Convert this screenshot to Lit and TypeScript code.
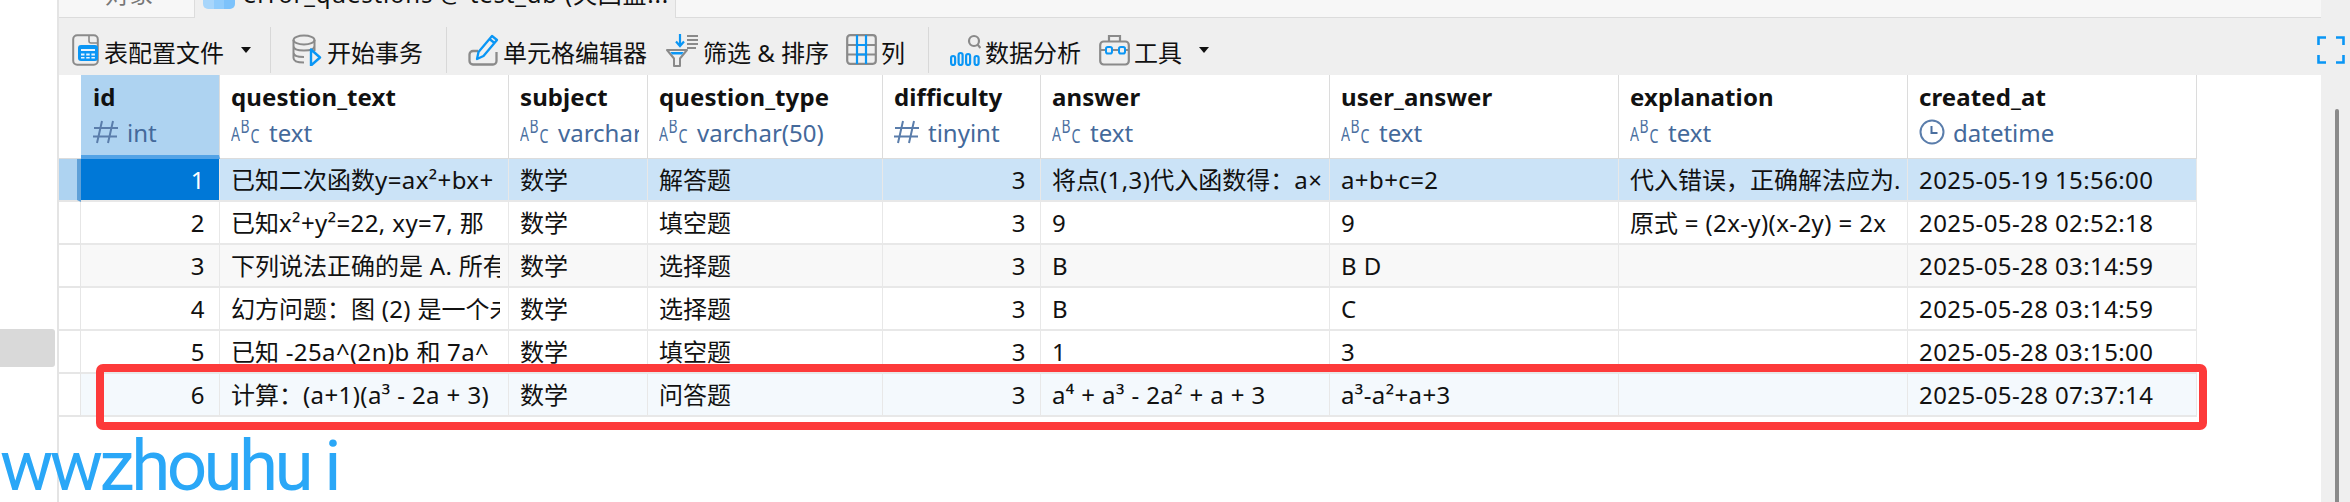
import { LitElement, html, css, svg } from "lit";
import { customElement } from "lit/decorators.js";

const GRAY = "#8a8a8a";
const BLUE = "#0a96f5";

const icons = {
  file: svg`<rect x="2.200" y="1.200" width="24.600" height="29.600" rx="4" fill="none" stroke="${GRAY}" stroke-width="2"/><path d="M18 1 v6 a2 2 0 0 0 2 2 h7" fill="none" stroke="${GRAY}" stroke-width="1.600"/><rect x="7" y="11" width="20" height="16" rx="3" fill="${BLUE}"/><path d="M10 15h14v2H10zM10 19.500h3.500v2H10zM15.200 19.500h3.500v2h-3.500zM20.400 19.500h3.500v2h-3.500zM10 23h3.500v1.600H10zM15.200 23h3.500v1.600h-3.500zM20.400 23h3.500v1.600h-3.500z" fill="#e8f4fe"/>`,
  db: svg`<g fill="none" stroke="${GRAY}" stroke-width="2"><ellipse cx="12" cy="6" rx="10.500" ry="4.500"/><path d="M1.500 6v18c0 3 5 4.500 10.500 4.500M22.500 6v11M1.500 12c0 3 5 4.500 10.500 4.500s10.500-1.500 10.500-4.500M1.500 18.500c0 3 5 4.500 10.500 4.500"/></g><path d="M19 15.500l9 8-9 8z" fill="none" stroke="${BLUE}" stroke-width="2.400" stroke-linejoin="round"/>`,
  pencil: svg`<path d="M10 17H5a3.500 3.500 0 0 0-3.500 3.500V27A3.500 3.500 0 0 0 5 30.500h20a3.500 3.500 0 0 0 3.500-3.500V18" fill="none" stroke="${GRAY}" stroke-width="2.300"/><path d="M9 25l1.500-7L24 2l5 4-13.500 16zM21.500 5l5 4" fill="none" stroke="${BLUE}" stroke-width="2.300" stroke-linejoin="round"/>`,
  filter: svg`<path d="M1 16h20l-7 8.500V32h-6v-7.500z" fill="none" stroke="${GRAY}" stroke-width="2" stroke-linejoin="round"/><path d="M4.500 18h13l-1.500 2.500H6z" fill="${BLUE}"/><path d="M14 0v12M10 7.500l4 4.500 4-4.500" fill="none" stroke="${BLUE}" stroke-width="2.200"/><path d="M21 2h11M21 6h11M21 10h11M21 14h9" stroke="${GRAY}" stroke-width="1.800"/>`,
  cols: svg`<rect x="1.200" y="1.200" width="28.600" height="28.600" rx="3" fill="none" stroke="${GRAY}" stroke-width="2.200"/><path d="M1 11h29M1 20.500h29" stroke="${GRAY}" stroke-width="1.800"/><path d="M11 1v29M20 1v29M11 11h9M11 20.500h9" stroke="${BLUE}" stroke-width="2.200"/>`,
  chart: svg`<g fill="none" stroke="${BLUE}" stroke-width="2.200"><rect x="1.100" y="22" width="4" height="9" rx="2"/><rect x="8.600" y="19" width="4" height="12" rx="2"/><rect x="16.100" y="20" width="4" height="11" rx="2"/><rect x="24.600" y="22" width="4" height="9" rx="2"/></g><circle cx="24" cy="7" r="5" fill="none" stroke="${GRAY}" stroke-width="2.200"/><path d="M27.500 10.500l3 3.500" stroke="${GRAY}" stroke-width="2.200"/>`,
  tools: svg`<rect x="1.200" y="7.500" width="28.600" height="23" rx="3.500" fill="none" stroke="${GRAY}" stroke-width="2.200"/><path d="M10 7.500V2h11v5.500" fill="none" stroke="${GRAY}" stroke-width="2.200"/><path d="M1.500 16h5M13 16h7M27 16h3" stroke="${GRAY}" stroke-width="2"/><rect x="7" y="13" width="6" height="6.500" rx="1.800" fill="none" stroke="${BLUE}" stroke-width="2"/><rect x="20" y="13" width="6" height="6.500" rx="1.800" fill="none" stroke="${BLUE}" stroke-width="2"/>`,
};

const icon = (name: keyof typeof icons) =>
  name === "filter"
    ? html`<svg class="tico" viewBox="0 0 33 33" width="33" height="33">${icons[name]}</svg>`
    : html`<svg class="tico" viewBox="0 0 31 32" width="31" height="32">${icons[name]}</svg>`;

const hash = html`<svg class="tyico" viewBox="0 0 26 24" width="26" height="24"><path d="M9 1L4 23M20 1L15 23M1 8h24M0 16.500h24" fill="none" stroke="#5a7dab" stroke-width="2"/></svg>`;
const abc = html`<svg class="tyico" viewBox="0 0 30 24" width="30" height="24"><g fill="#4a6f9f" font-family="'Noto Sans','Liberation Sans',sans-serif" font-size="20"><text x="0" y="21" textLength="9" lengthAdjust="spacingAndGlyphs">A</text><text x="9.500" y="13" textLength="9" lengthAdjust="spacingAndGlyphs">B</text><text x="19.500" y="23" textLength="9" lengthAdjust="spacingAndGlyphs">C</text></g></svg>`;
const clock = html`<svg class="tyico" viewBox="0 0 26 26" width="26" height="26"><circle cx="13" cy="13" r="11.500" fill="none" stroke="#5a7dab" stroke-width="2"/><path d="M12.500 7v7h6" fill="none" stroke="#4a6f9f" stroke-width="2"/></svg>`;

const cols: { name: string; type: string; ty: any; num?: boolean }[] = [
  { name: "id", type: "int", ty: hash, num: true },
  { name: "question_text", type: "text", ty: abc },
  { name: "subject", type: "varchar(50)", ty: abc },
  { name: "question_type", type: "varchar(50)", ty: abc },
  { name: "difficulty", type: "tinyint", ty: hash, num: true },
  { name: "answer", type: "text", ty: abc },
  { name: "user_answer", type: "text", ty: abc },
  { name: "explanation", type: "text", ty: abc },
  { name: "created_at", type: "datetime", ty: clock },
];

const rows: string[][] = [
  ["1", "已知二次函数y=ax²+bx+", "数学", "解答题", "3", "将点(1,3)代入函数得：a×", "a+b+c=2", "代入错误，正确解法应为.", "2025-05-19 15:56:00"],
  ["2", "已知x²+y²=22, xy=7, 那", "数学", "填空题", "3", "9", "9", "原式 = (2x-y)(x-2y) = 2x", "2025-05-28 02:52:18"],
  ["3", "下列说法正确的是 A. 所有的有理数", "数学", "选择题", "3", "B", "B D", "", "2025-05-28 03:14:59"],
  ["4", "幻方问题：图 (2) 是一个未完成的幻方", "数学", "选择题", "3", "B", "C", "", "2025-05-28 03:14:59"],
  ["5", "已知 -25a^(2n)b 和 7a^", "数学", "填空题", "3", "1", "3", "", "2025-05-28 03:15:00"],
  ["6", "计算：(a+1)(a³ - 2a + 3)", "数学", "问答题", "3", "a⁴ + a³ - 2a² + a + 3", "a³-a²+a+3", "", "2025-05-28 07:37:14"],
];

/* Latin runs are set slightly wider than the CJK ones, as in the reference font. */
const runs = (text: string) =>
  text.split(/([\u3000-\u9fff\uff00-\uffef]+)/).map((part, i) =>
    i % 2 ? html`${part}` : html`<span class="lat">${part}</span>`
  );

@customElement("app-root")
export class AppRoot extends LitElement {
  static styles = css`
    :host {
      display: block;
      width: 2350px;
      height: 502px;
      position: relative;
      overflow: hidden;
      background: #fff;
      font-family: "Noto Sans", "Noto Sans CJK SC", sans-serif;
      color: #111;
    }
    .shell {
      display: grid;
      grid-template-columns: 59px 2262px 29px;
      height: 502px;
    }
    .side {
      border-right: 2px solid #e4e4e4;
      box-sizing: border-box;
      padding-top: 329px;
    }
    .blob {
      width: 55px;
      height: 38px;
      background: #d9d9d9;
      border-radius: 0 3px 3px 0;
    }
    .main {
      display: flex;
      flex-direction: column;
      min-width: 0;
    }
    .tabs {
      height: 18px;
      display: flex;
      overflow: hidden;
      flex: none;
    }
    .tab {
      box-sizing: border-box;
      height: 18px;
      display: flex;
      align-items: flex-end;
      font-size: 24px;
      line-height: 30px;
      overflow: hidden;
    }
    .tab span {
      display: block;
      white-space: nowrap;
    }
    .tab1 {
      width: 136px;
      padding-left: 46px;
      background: #f7f7f7;
      border-right: 1px solid #dcdcdc;
      border-bottom: 1px solid #dcdcdc;
      color: #777;
    }
    .tab1 span {
      margin-bottom: 8px;
    }
    .tab2 {
      width: 480px;
      padding-left: 8px;
      gap: 8px;
      background: #efefef;
      color: #111;
    }
    .tab2 span {
      margin-bottom: 9px;
      letter-spacing: 0.8px;
    }
    .tabfill {
      flex: 1;
      background: #f7f7f7;
      border-left: 1px solid #dcdcdc;
      border-bottom: 1px solid #dcdcdc;
    }
    .tabico {
      flex: none;
      width: 32px;
      height: 9px;
      margin-bottom: 9px;
      border-radius: 0 0 5px 5px;
      background: linear-gradient(90deg, #a8d6fb 0 33%, #90ccfc 33% 66%, #7cc2fb 66%);
    }
    .toolbar {
      height: 57px;
      box-sizing: border-box;
      padding: 7px 0 0 12px;
      background: #efefef;
      display: flex;
      align-items: center;
      font-size: 24px;
      flex: none;
    }
    .tool {
      display: flex;
      align-items: center;
      gap: 4px;
      white-space: nowrap;
    }
    .tool span {
      padding-top: 2px;
      margin-right: 1px;
    }
    .first {
      gap: 2px;
    }
    .first .caret {
      margin-left: 14px;
    }
    .filter {
      gap: 4px;
      margin-left: 18px;
    }
    .colsbtn {
      margin-left: 16px;
    }
    .toolsbtn {
      margin-left: 17px;
    }
    .tico {
      flex: none;
    }
    .caret {
      width: 0;
      height: 0;
      border-left: 5px solid transparent;
      border-right: 5px solid transparent;
      border-top: 6px solid #111;
      margin-left: 12px;
    }
    .sep {
      width: 1px;
      height: 46px;
      background: #d8d8d8;
      flex: none;
      margin: 0 21px 0 22px;
    }
    .sep.s1 {
      margin-left: 19px;
    }
    .full {
      margin-left: auto;
      margin-right: -24px;
      flex: none;
      position: relative;
    }
    .table {
      display: grid;
      grid-template-columns: 22px 139px 289px 139px 235px 158px 289px 289px 289px 289px;
      grid-auto-rows: 43px;
      grid-template-rows: 84px;
    }
    .corner {
      background: #fff;
      border-bottom: 1px solid #dcdcdc;
    }
    .hd {
      box-sizing: border-box;
      border-right: 1px solid #dcdcdc;
      border-bottom: 1px solid #dcdcdc;
      padding: 4px 8px 0 11px;
      overflow: hidden;
      min-width: 0;
    }
    .hd.sel {
      background: #aed3f1;
      border-bottom: 4px solid #53a3e6;
      padding-left: 12px;
    }
    .hname {
      font-weight: 700;
      font-size: 24px;
      line-height: 36px;
      letter-spacing: 0.1px;
      white-space: nowrap;
    }
    .htype {
      display: flex;
      align-items: center;
      gap: 8px;
      height: 32px;
      margin-top: 1px;
      font-size: 24px;
      color: #44699b;
      white-space: nowrap;
      overflow: hidden;
    }
    .tyico {
      flex: none;
    }
    .rh {
      box-sizing: border-box;
      border-bottom: 2px solid #e6e6e6;
      border-right: 1px solid #e6e6e6;
    }
    .rh.sel {
      background: #aed3f1;
      border-right: 4px solid #5ea0d8;
    }
    .c {
      box-sizing: border-box;
      border-right: 1px solid #e8e8e8;
      border-bottom: 2px solid #e8e8e8;
      padding: 0 8px 0 11px;
      font-size: 24px;
      line-height: 41px;
      white-space: nowrap;
      overflow: hidden;
      min-width: 0;
    }
    .lat {
      letter-spacing: 0.4px;
    }
    .clip {
      display: block;
      overflow: hidden;
    }
    .c.num {
      text-align: right;
      padding-right: 14px;
    }
    .r1 { background: #cbe3f7; }
    .r3 { background: #f8f8f8; }
    .r6 { background: #f4f9fd; }
    .c.cur {
      background: #0078d7;
      color: #fff;
    }
    .scroll {
      background: #efefef;
      padding: 109px 11px 0 14px;
    }
    .thumb {
      height: 393px;
      background: #8a8a8a;
      border-radius: 2px 2px 0 0;
    }
    .redbox {
      position: absolute;
      left: 96px;
      top: 364px;
      width: 2111px;
      height: 66px;
      box-sizing: border-box;
      border: 8px solid #fd3a3a;
      border-radius: 7px;
    }
    .mark {
      position: absolute;
      left: 0;
      top: 416px;
      font-size: 71px;
      line-height: 100px;
      font-weight: 400;
      letter-spacing: -3.6px;
      color: #2aa7f7;
      white-space: nowrap;
      font-family: Roboto, "Noto Sans", sans-serif;
    }
  `;

  render() {
    return html`
      <div class="shell">
        <div class="side"><div class="blob"></div></div>
        <div class="main">
          <div class="tabs">
            <div class="tab tab1"><span>对象</span></div>
            <div class="tab tab2"><div class="tabico"></div><span>error_questions @ test_db (央国蓝...</span></div>
            <div class="tabfill"></div>
          </div>
          <div class="toolbar">
            <div class="tool first">${icon("file")}<span>表配置文件</span><i class="caret"></i></div>
            <div class="sep s1"></div>
            <div class="tool">${icon("db")}<span>开始事务</span></div>
            <div class="sep"></div>
            <div class="tool">${icon("pencil")}<span>单元格编辑器</span></div>
            <div class="tool filter">${icon("filter")}<span>筛选 &amp; 排序</span></div>
            <div class="tool colsbtn">${icon("cols")}<span>列</span></div>
            <div class="sep"></div>
            <div class="tool">${icon("chart")}<span>数据分析</span></div>
            <div class="tool toolsbtn">${icon("tools")}<span>工具</span><i class="caret"></i></div>
            <svg class="full" viewBox="0 0 28 28" width="28" height="28"><path d="M1.500 9V1.500H9M19 1.500h7.500V9M1.500 19v7.500H9M26.500 19v7.500H19" fill="none" stroke="${BLUE}" stroke-width="2.600"/></svg>
          </div>
          <div class="table">
            <div class="corner"></div>
            ${cols.map((c, i) => html`
              <div class="hd ${i === 0 ? "sel" : ""}">
                <div class="hname">${c.name}</div>
                <div class="htype">${c.ty}<span>${c.type}</span></div>
              </div>`)}
            ${rows.map((r, ri) => html`
              <div class="rh ${ri === 0 ? "sel" : ""}"></div>
              ${r.map((v, ci) => html`
                <div class="c r${ri + 1} ${cols[ci].num ? "num" : ""} ${ri === 0 && ci === 0 ? "cur" : ""}"><span class="clip">${runs(v)}</span></div>`)}
            `)}
          </div>
        </div>
        <div class="scroll"><div class="thumb"></div></div>
      </div>
      <div class="redbox"></div>
      <div class="mark">wwzhouhu i</div>
    `;
  }
}
